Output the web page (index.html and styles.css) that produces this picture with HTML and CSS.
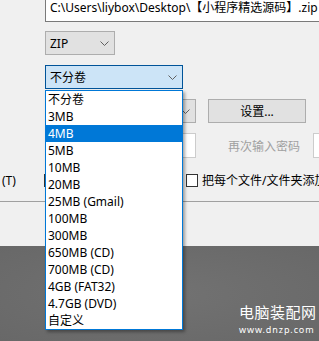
FILE: index.html
```html
<!DOCTYPE html>
<html lang="zh-CN">
<head>
    <meta charset="UTF-8">
    <title>压缩选项</title>
    <link rel="stylesheet" href="styles.css">
</head>
<body>
    <div class="window">
        <div class="row row-path">
            <div class="path-input">C:\Users\liybox\Desktop\【小程序精选源码】.zip</div>
        </div>
        <div class="row row-format">
            <div class="combo combo-format">
                <span>ZIP</span>
                <svg class="chevron" width="9" height="5" viewBox="0 0 9 5"><path d="M0.5 0.5 L4.5 4.5 L8.5 0.5" fill="none" stroke="#606060"/></svg>
            </div>
        </div>
        <div class="row row-split">
            <div class="combo combo-split">
                <span>不分卷</span>
                <svg class="chevron" width="9" height="5" viewBox="0 0 9 5"><path d="M0.5 0.5 L4.5 4.5 L8.5 0.5" fill="none" stroke="#606060"/></svg>
            </div>
        </div>
        <div class="row row-settings">
            <div class="combo combo-hidden">
                <svg class="chevron" width="9" height="5" viewBox="0 0 9 5"><path d="M0.5 0.5 L4.5 4.5 L8.5 0.5" fill="none" stroke="#606060"/></svg>
            </div>
            <div class="button">设置...</div>
        </div>
        <div class="row row-password">
            <div class="field field-hidden"></div>
            <div class="hint">再次输入密码</div>
            <div class="field field-right"></div>
        </div>
        <div class="row row-options">
            <div class="cut-label">(T)</div>
            <div class="caret"></div>
            <div class="check"><span class="box"></span>把每个文件/文件夹添加</div>
        </div>
        <div class="separator"></div>
    </div>
    <div class="desktop">
        <div class="mark">
            <div class="mark-title">电脑装配网</div>
            <div class="mark-url">www.dnzp.com</div>
        </div>
    </div>

    <!-- open list of the split combo -->
    <ul class="dropdown">
        <li>不分卷</li>
        <li>3MB</li>
        <li class="active">4MB</li>
        <li>5MB</li>
        <li>10MB</li>
        <li>20MB</li>
        <li>25MB (Gmail)</li>
        <li>100MB</li>
        <li>300MB</li>
        <li>650MB (CD)</li>
        <li>700MB (CD)</li>
        <li>4GB (FAT32)</li>
        <li>4.7GB (DVD)</li>
        <li>自定义</li>
    </ul>
</body>
</html>
```

FILE: styles.css
```css
* {
    margin: 0;
    padding: 0;
    box-sizing: border-box;
}
body {
    width: 319px;
    height: 341px;
    overflow: hidden;
    position: relative;
    font-family: 'Noto Sans', 'Noto Sans CJK SC', sans-serif;
    font-size: 12px;
    color: #000;
    background: #6e6e6e;
}
.window {
    height: 246px;
    background: #f0f0f0;
    overflow: hidden;
}
.row {
    display: flex;
    align-items: center;
    white-space: nowrap;
}
.row > * {
    flex: none;
}
.row-path {
    height: 22px;
    padding-left: 45px;
}
.path-input {
    height: 26px;
    margin-top: -4px;
    padding: 4px 0 0 4px;
    width: 300px;
    background: #fff;
    border: 1px solid #7a7a7a;
    border-right: none;
    line-height: 14px;
}
.row-format {
    margin-top: 9px;
    padding-left: 45px;
}
.combo {
    height: 24px;
    display: flex;
    align-items: center;
    justify-content: space-between;
    padding: 0 5px 0 4px;
    background: #e1e1e1;
    border: 1px solid #adadad;
}
.combo-format {
    width: 70px;
}
.row-split {
    margin-top: 10px;
    padding-left: 45px;
}
.combo-split {
    width: 138px;
    background: #cce4f7;
    border-color: #005499;
}
.row-settings {
    margin-top: 10px;
    height: 24px;
    padding-left: 50px;
}
.combo-hidden {
    width: 146px;
    justify-content: flex-end;
}
.button {
    margin-left: 12px;
    width: 98px;
    height: 24px;
    display: flex;
    align-items: center;
    justify-content: center;
    background: #e1e1e1;
    border: 1px solid #adadad;
}
.row-password {
    margin-top: 10px;
    height: 25px;
    padding-left: 50px;
}
.field {
    height: 25px;
    background: #fff;
    border: 1px solid #cccccc;
}
.field-hidden {
    width: 146px;
}
.hint {
    width: 117px;
    text-align: right;
    padding-right: 13px;
    color: #a0a0a0;
}
.field-right {
    width: 20px;
}
.row-options {
    margin-top: 15px;
    height: 14px;
}
.cut-label {
    width: 44px;
    padding-left: 2px;
}
.caret {
    width: 1px;
    height: 13px;
    background: #333;
}
.check {
    margin-left: 141px;
    display: flex;
    align-items: center;
}
.box {
    width: 12px;
    height: 13px;
    border: 1px solid #333;
    background: #fff;
    margin-right: 4px;
}
.separator {
    margin-top: 14px;
    height: 1px;
    background: #a0a0a0;
}
.desktop {
    height: 95px;
    position: relative;
    background: radial-gradient(#727272, #686868);
}
.mark {
    position: absolute;
    left: 239px;
    top: 58px;
    color: #fff;
}
.mark-title {
    font-size: 15px;
    line-height: 17px;
    letter-spacing: 0.5px;
}
.mark-url {
    margin-top: 4px;
    font-size: 9px;
    line-height: 10px;
    letter-spacing: 0.9px;
}
/* open list */
.dropdown {
    position: absolute;
    left: 45px;
    top: 90px;
    width: 138px;
    list-style: none;
    background: #fff;
    border: 1px solid #0078d7;
    box-shadow: 2px 2px 3px rgba(0, 0, 0, 0.35);
}
.dropdown li {
    height: 17px;
    line-height: 17px;
    padding-left: 2px;
}
.dropdown li.active {
    background: #0078d7;
    color: #fff;
}
```
